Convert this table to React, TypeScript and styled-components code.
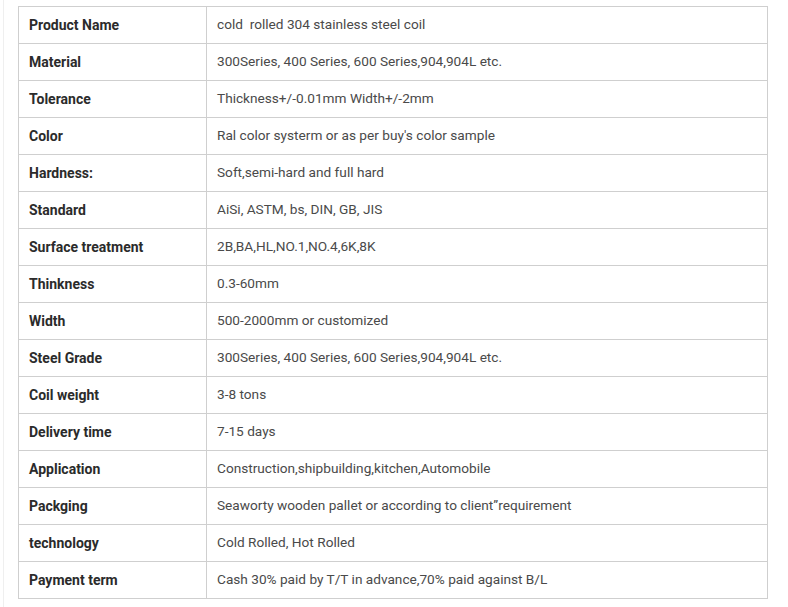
import React from "react";
import styled, { createGlobalStyle } from "styled-components";

const Global = createGlobalStyle`
  html, body { margin: 0; padding: 0; background: #fff; }
  body { font-family: Roboto, "Liberation Sans", Arial, sans-serif; }
`;

const Page = styled.div`
  margin-left: 3px;
  border-left: 1px solid #efefef;
  padding: 6px 0 8px 14px;
  min-height: 593px;
`;

const Table = styled.table`
  border-collapse: collapse;
  width: 750px;
  table-layout: fixed;
`;

const Row = styled.tr`
  height: 37px;
`;

const Cell = styled.td<{ $label?: boolean }>`
  border: 1px solid #cfcfcf;
  padding: 0 0 ${(p) => (p.$label ? "0" : "2px")} 10px;
  font-size: ${(p) => (p.$label ? "14px" : "13.65px")};
  line-height: 16px;
  vertical-align: middle;
  color: ${(p) => (p.$label ? "#2b2b2b" : "#4a4a4a")};
  font-weight: ${(p) => (p.$label ? 700 : 400)};
  white-space: pre;
`;

const rows: [string, string][] = [
  ["Product Name", "cold  rolled 304 stainless steel coil"],
  ["Material", "300Series, 400 Series, 600 Series,904,904L etc."],
  ["Tolerance", "Thickness+/-0.01mm Width+/-2mm"],
  ["Color", "Ral color systerm or as per buy's color sample"],
  ["Hardness:", "Soft,semi-hard and full hard"],
  ["Standard", "AiSi, ASTM, bs, DIN, GB, JIS"],
  ["Surface treatment", "2B,BA,HL,NO.1,NO.4,6K,8K"],
  ["Thinkness", "0.3-60mm"],
  ["Width", "500-2000mm or customized"],
  ["Steel Grade", "300Series, 400 Series, 600 Series,904,904L etc."],
  ["Coil weight", "3-8 tons"],
  ["Delivery time", "7-15 days"],
  ["Application", "Construction,shipbuilding,kitchen,Automobile"],
  ["Packging", "Seaworty wooden pallet or according to client\u201drequirement"],
  ["technology", "Cold Rolled, Hot Rolled"],
  ["Payment term", "Cash 30% paid by T/T in advance,70% paid against B/L"],
];

export default function App() {
  return (
    <>
      <Global />
      <Page>
        <Table>
          <colgroup>
            <col style={{ width: 188 }} />
            <col />
          </colgroup>
          <tbody>
            {rows.map(([k, v]) => (
              <Row key={k}>
                <Cell $label>{k}</Cell>
                <Cell>{v}</Cell>
              </Row>
            ))}
          </tbody>
        </Table>
      </Page>
    </>
  );
}
